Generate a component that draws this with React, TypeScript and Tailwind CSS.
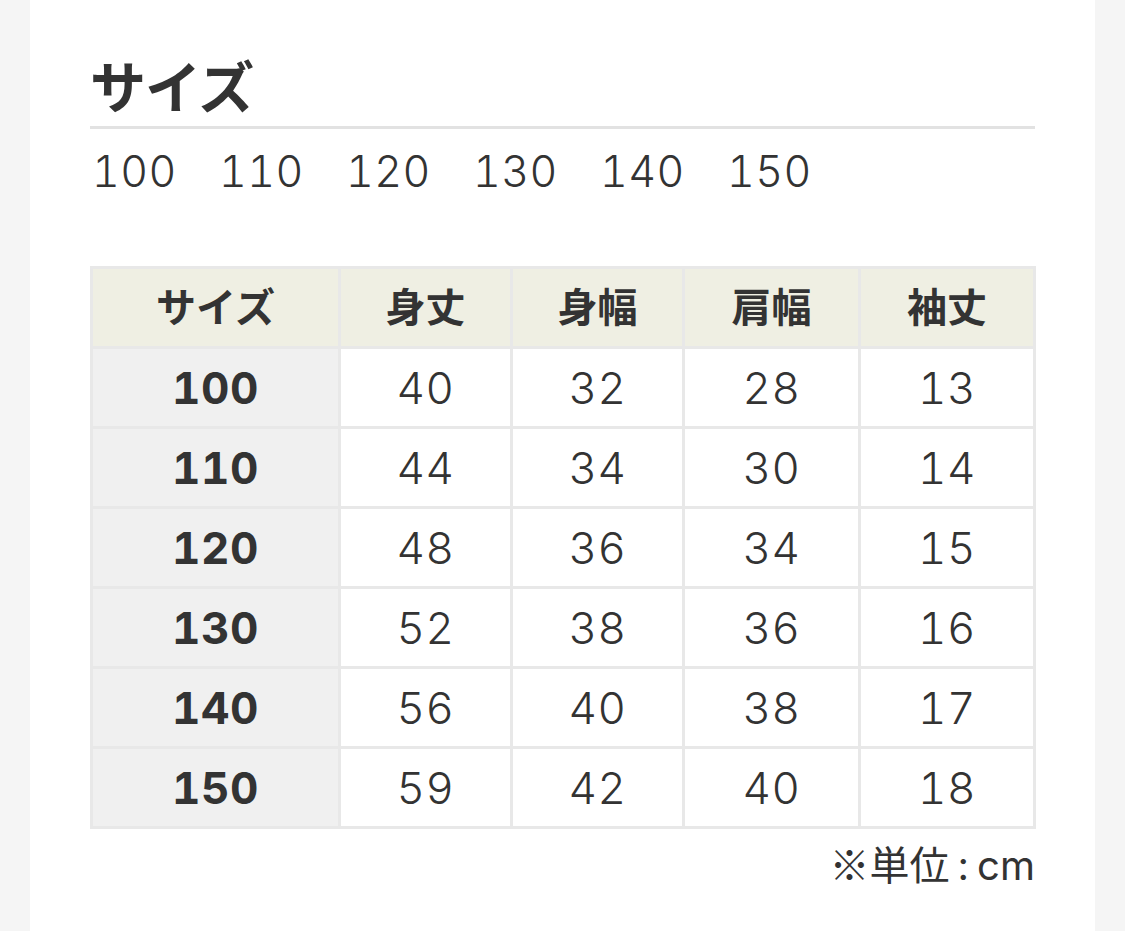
const sizes = ["100", "110", "120", "130", "140", "150"];

const rows = [
  ["100", "40", "32", "28", "13"],
  ["110", "44", "34", "30", "14"],
  ["120", "48", "36", "34", "15"],
  ["130", "52", "38", "36", "16"],
  ["140", "56", "40", "38", "17"],
  ["150", "59", "42", "40", "18"],
];

const headers = ["サイズ", "身丈", "身幅", "肩幅", "袖丈"];

export default function App() {
  return (
    <div
      className="w-full h-[931px] bg-[#f5f5f5] overflow-hidden text-[#333]"
      style={{ fontFamily: 'Inter, "Noto Sans CJK JP", sans-serif' }}
    >
      <div className="ml-[30px] w-[1065px] h-full bg-white px-[60px] pt-[44px]">
        <h2 className="text-[56px] font-bold leading-[80px] tracking-[-1px] border-b-[3px] border-[#e2e2e2] pb-[2px] font-['Noto_Sans_CJK_JP',sans-serif]">
          サイズ
        </h2>
        <div className="flex gap-[48px] text-[43px] font-light leading-[64px] pl-[2px] mt-[10px] tabular-nums tracking-[0.01em]">
          {sizes.map((s) => (
            <span key={s} className="w-[79px]">{s}</span>
          ))}
        </div>

        <table className="mt-[63px] w-[943px] border-collapse table-fixed tabular-nums tracking-[0.035em]">
          <colgroup>
            <col className="w-[248px]" />
            <col className="w-[172px]" />
            <col className="w-[172px]" />
            <col className="w-[176px]" />
            <col className="w-[175px]" />
          </colgroup>
          <thead>
            <tr className="h-[80px]">
              {headers.map((h) => (
                <th
                  key={h}
                  className="border-[3px] border-[#e8e8e8] bg-[#efefe3] text-[40px] font-bold text-center p-0 tracking-normal"
                >
                  {h}
                </th>
              ))}
            </tr>
          </thead>
          <tbody>
            {rows.map((r) => (
              <tr key={r[0]} className="h-[80px]">
                {r.map((c, i) => (
                  <td
                    key={i}
                    className={
                      i === 0
                        ? "border-[3px] border-[#e8e8e8] bg-[#f0f0f0] text-[44px] font-bold text-center p-0"
                        : "border-[3px] border-[#e8e8e8] bg-white text-[44px] font-light text-center p-0"
                    }
                  >
                    {c}
                  </td>
                ))}
              </tr>
            ))}
          </tbody>
        </table>
        <div className="text-right text-[40px] leading-[64px] mt-[2px]">
          <span className="font-['Noto_Sans_CJK_JP',sans-serif]">※単位</span>
          <span className="mx-[8px]">:</span>
          cm
        </div>
      </div>
    </div>
  );
}
